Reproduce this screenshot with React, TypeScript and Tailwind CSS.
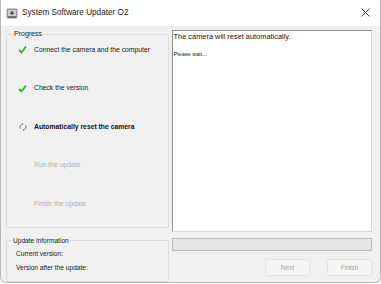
import React from "react";

const Check = () => (
  <svg width="9" height="9" viewBox="0 0 9 9" className="shrink-0">
    <path d="M1 5 L3.5 7.5 L8 1.5" fill="none" stroke="#2fb52a" strokeWidth="1.8" />
  </svg>
);

const Spinner = () => (
  <svg width="8" height="8" viewBox="0 0 8 8" className="shrink-0">
    <path d="M4 1 A3 3 0 0 0 1.5 5.7" fill="none" stroke="#777" strokeWidth="1" />
    <path d="M4 7 A3 3 0 0 0 6.5 2.3" fill="none" stroke="#777" strokeWidth="1" />
    <path d="M3.2 0.2 L4.6 1 L3.2 1.8 Z" fill="#777" />
    <path d="M4.8 7.8 L3.4 7 L4.8 6.2 Z" fill="#777" />
  </svg>
);

const AppIcon = () => (
  <svg width="12" height="11" viewBox="0 0 12 11" className="shrink-0">
    <rect x="0.5" y="0.5" width="11" height="10" rx="1" fill="#9a9a9a" />
    <rect x="2" y="2" width="8" height="6" fill="#cfcfcf" />
    <circle cx="6" cy="5" r="1.8" fill="#555" />
    <rect x="2" y="8.5" width="8" height="1" fill="#444" />
  </svg>
);

const CloseX = () => (
  <svg width="9" height="9" viewBox="0 0 9 9" className="shrink-0">
    <path d="M0.5 0.5 L8.5 8.5 M8.5 0.5 L0.5 8.5" stroke="#333" strokeWidth="0.9" />
  </svg>
);

const steps: { label: string; state: "done" | "active" | "todo" }[] = [
  { label: "Connect the camera and the computer", state: "done" },
  { label: "Check the version", state: "done" },
  { label: "Automatically reset the camera", state: "active" },
  { label: "Run the update", state: "todo" },
  { label: "Finish the update", state: "todo" },
];

export default function App() {
  return (
    <div
      className="w-[381px] h-[284px] bg-white"
      style={{ fontFamily: '"Liberation Sans", Arial, sans-serif' }}
    >
      <div className="w-[381px] h-[283px] flex flex-col border border-t-0 border-[#b9b9b9] rounded-b-[6px] overflow-hidden bg-[#f0f0f0]">
        <div className="h-[26px] bg-white flex items-center pl-[5px] pr-[10px] shrink-0">
          <AppIcon />
          <span className="ml-[4px] text-[8.2px] text-[#1a1a1a]">System Software Updater O2</span>
          <span className="ml-auto mt-[-2px]">
            <CloseX />
          </span>
        </div>
        <div className="flex-1 flex flex-col pl-[5px] pr-[8px] pt-[4px]">
          <div className="flex gap-[3px] h-[202px]">
            <fieldset className="w-[163px] h-[199px] mt-[-1px] border border-[#dcdcdc] rounded-[2px] px-[5px] pt-0">
              <legend className="text-[7px] text-[#222] px-[1px] ml-[1px]">Progress</legend>
              <div className="flex flex-col mt-[-9px]">
                {steps.map((s, i) => (
                  <div key={i} className="h-[38.5px] flex items-center pl-[5px]">
                    <div className="w-[11px] flex justify-center">
                      {s.state === "done" && <Check />}
                      {s.state === "active" && <Spinner />}
                    </div>
                    <span
                      className={
                        "ml-[6px] text-[6.8px] " +
                        (s.state === "active"
                          ? "font-bold text-[#111]"
                          : s.state === "done"
                            ? "text-[#222]"
                            : "text-[#b4b4b4]")
                      }
                    >
                      {s.label}
                    </span>
                  </div>
                ))}
              </div>
            </fieldset>
            <div className="w-[201px] h-[202px] bg-white border border-[#8f8f8f] border-r-[#d8d8d8] border-b-[#d8d8d8] px-[1px] pt-[1px]">
              <div className="text-[7.4px] text-[#111] leading-[10px]">The camera will reset automatically.</div>
              <div className="text-[5.6px] text-[#222] mt-[8px]">Please wait...</div>
            </div>
          </div>
          <div className="flex gap-[3px] mt-[2px]">
            <fieldset className="w-[163px] h-[46px] mt-[2px] border border-[#dcdcdc] rounded-[2px] px-[9px] pt-0">
              <legend className="text-[6.6px] text-[#222] px-[1px] ml-[-4px]">Update information</legend>
              <div className="text-[6.6px] text-[#222] mt-[3px]">Current version:</div>
              <div className="text-[6.6px] text-[#222] mt-[4px]">Version after the update:</div>
            </fieldset>
            <div className="w-[201px] flex flex-col pt-[4px]">
              <div className="h-[13px] bg-[#e6e6e6] border border-[#bcbcbc]" />
              <div className="flex justify-end gap-[17px] mt-[8px]">
                <div className="w-[45px] h-[17px] rounded-[3px] bg-[#f5f5f5] border border-[#e3e3e3] flex items-center justify-center text-[6.6px] text-[#a3a3a3]">
                  Next
                </div>
                <div className="w-[45px] h-[17px] rounded-[3px] bg-[#f5f5f5] border border-[#e3e3e3] flex items-center justify-center text-[6.6px] text-[#a3a3a3]">
                  Finish
                </div>
              </div>
            </div>
          </div>
        </div>
      </div>
    </div>
  );
}
